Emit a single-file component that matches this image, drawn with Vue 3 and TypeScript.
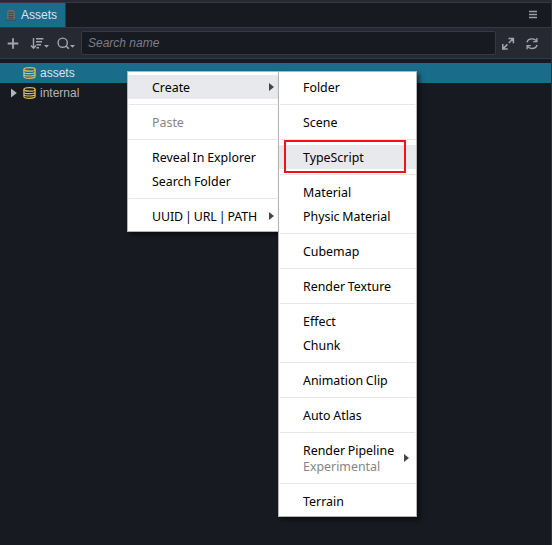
<script setup lang="ts">
interface Item {
  label: string
  note?: string
  active?: boolean
  disabled?: boolean
  sub?: boolean
  tight?: boolean
}

const mainMenu: Item[][] = [
  [{ label: 'Create', active: true, sub: true }],
  [{ label: 'Paste', disabled: true }],
  [{ label: 'Reveal In Explorer' }, { label: 'Search Folder' }],
  [{ label: 'UUID | URL | PATH', sub: true, tight: true }],
]

const createMenu: Item[][] = [
  [{ label: 'Folder' }],
  [{ label: 'Scene' }],
  [{ label: 'TypeScript', active: true }],
  [{ label: 'Material' }, { label: 'Physic Material' }],
  [{ label: 'Cubemap' }],
  [{ label: 'Render Texture' }],
  [{ label: 'Effect' }, { label: 'Chunk' }],
  [{ label: 'Animation Clip' }],
  [{ label: 'Auto Atlas' }],
  [{ label: 'Render Pipeline', note: 'Experimental', sub: true }],
  [{ label: 'Terrain' }],
]

const menus = [
  { name: 'main', groups: mainMenu },
  { name: 'create', groups: createMenu },
]

const nodes = [
  { name: 'assets', selected: true, arrow: false },
  { name: 'internal', selected: false, arrow: true },
]
</script>

<template>
  <div class="panel">
    <header class="tabs">
      <div class="tab">
        <svg class="tab-icon" width="10" height="12" viewBox="0 0 10 12">
          <path d="M1 11V2.5L2.5 .8h5L9 2.5V11z" fill="#6b6865" />
          <path d="M0 11.2h10M2.5 3.5h5M2.5 5.5h5M2.5 7.5h5M2.5 9.3h5" stroke="#44494c" stroke-width="1" />
        </svg>
        <span>Assets</span>
      </div>
      <svg class="burger" width="8" height="9" viewBox="0 0 8 9">
        <path d="M0 1.5h8M0 4.5h8M0 7.5h8" stroke="#9c9ea6" stroke-width="1.7" />
      </svg>
    </header>

    <div class="toolbar">
      <svg class="tools" width="81" height="30" viewBox="0 0 81 30" fill="none" stroke="#a3a5ae">
        <path d="M13 10.2v10.6M7.7 15.5h10.6" stroke-width="1.8" />
        <path d="M33.5 10v10M31 17.6l2.5 2.7 2.5-2.7" stroke-width="1.4" />
        <path d="M36 10.7h7.4M36 13.7h6M36.5 16.7h4.5M36.5 19.7h2.5" stroke-width="1.5" />
        <path d="M44 17h5l-2.5 2.7z" fill="#a3a5ae" stroke="none" />
        <circle cx="62.7" cy="14.7" r="4.6" stroke-width="1.4" />
        <path d="M65.8 17.8l3 3" stroke-width="1.6" />
        <path d="M70 17h5l-2.5 2.7z" fill="#a3a5ae" stroke="none" />
      </svg>
      <div class="search">Search name</div>
      <svg class="actions" width="55" height="30" viewBox="0 0 55 30" fill="none" stroke="#a3a5ae" stroke-width="1.3">
        <path d="M12.5 10.4h4.9v4.9M17 10.8l-4.2 4.2M6.8 16.1V21h4.9M7.2 20.6l4.2-4.2" stroke-width="1.5" />
        <path d="M30.9 14.3a5.2 4.3 0 0 1 9.4-1.6M40.9 10v3.6h-3.7M41.1 17a5.2 4.3 0 0 1-9.4 1.6M31.1 21.3v-3.6h3.7" />
      </svg>
    </div>

    <main class="tree">
      <div v-for="n in nodes" :key="n.name" class="node" :class="{ selected: n.selected }">
        <span class="fold">
          <svg v-if="n.arrow" width="6" height="10" viewBox="0 0 6 10"><path d="M0 .5L5.8 5 0 9.5z" fill="#b4b5b9" /></svg>
        </span>
        <svg class="db" width="13" height="12" viewBox="0 0 13 12" fill="none" stroke="#dfbd52" stroke-width="1.2">
          <ellipse cx="6.5" cy="2.4" rx="5.6" ry="1.8" />
          <path d="M.9 2.5v7c0 2.5 11.2 2.5 11.2 0v-7M.9 4.9c0 2.4 11.2 2.4 11.2 0M.9 7.2c0 2.4 11.2 2.4 11.2 0" />
        </svg>
        <span>{{ n.name }}</span>
      </div>
    </main>

    <div v-for="m in menus" :key="m.name" class="menu" :class="m.name">
      <div v-for="(g, i) in m.groups" :key="i" class="group">
        <div v-for="it in g" :key="it.label" class="item" :class="{ active: it.active, disabled: it.disabled, tall: it.note, tight: it.tight }">
          <div class="text">
            <span>{{ it.label }}</span>
            <span v-if="it.note" class="note">{{ it.note }}</span>
          </div>
          <svg v-if="it.sub" class="more" width="5" height="8" viewBox="0 0 5 8"><path d="M0 0l5 4-5 4z" fill="#444" /></svg>
        </div>
      </div>
    </div>
    <div class="marker"></div>
  </div>
</template>

<style>
body {
  margin: 0;
  background: #171a21;
}
</style>

<style scoped>
.panel {
  box-sizing: border-box;
  position: relative;
  width: 552px;
  height: 545px;
  overflow: hidden;
  padding-top: 2px;
  border-right: 1px solid #30333d;
  background: #171a21;
  color: #c9cbd0;
  font: 12px/20px "Liberation Sans", Arial, sans-serif;
  box-shadow: inset 0 2px #262932;
}
.tabs {
  box-sizing: border-box;
  display: flex;
  align-items: stretch;
  justify-content: space-between;
  height: 26px;
  border-top: 1px solid #363944;
  border-bottom: 1px solid #363944;
}
.tab {
  box-sizing: border-box;
  display: flex;
  align-items: center;
  width: 66px;
  padding-left: 6px;
  gap: 5px;
  border-right: 1px solid #363944;
  background: #196c8a;
  color: #dce5ea;
}
.burger {
  align-self: center;
  margin-right: 14px;
  margin-bottom: 2px;
}
.toolbar {
  box-sizing: border-box;
  display: flex;
  height: 31px;
  border-bottom: 1px solid #363944;
  background: #262932;
}
.search {
  box-sizing: border-box;
  flex: 1;
  height: 24px;
  margin-top: 3px;
  padding-left: 6px;
  border: 1px solid #363944;
  border-radius: 2px;
  background: #171a21;
  color: #7d7f84;
  font-style: italic;
  line-height: 22px;
}
.tree {
  padding-top: 4px;
}
.node {
  display: flex;
  align-items: center;
  height: 20px;
  color: #b3b5ba;
}
.node.selected {
  background: #196c8a;
  color: #dce5ea;
}
.fold {
  display: flex;
  width: 12px;
  padding-left: 11px;
}
.db {
  margin-right: 4px;
}
.menu {
  position: absolute;
  top: 71px;
  box-sizing: border-box;
  padding: 3px 0;
  border: 1px solid #b4b4b4;
  background: #fff;
  color: #000;
  box-shadow: 3px 3px 4px rgba(0, 0, 0, 0.5);
  font: 12.4px/16px "Noto Sans", "Open Sans", sans-serif;
  word-spacing: -0.5px;
}
.main {
  left: 127px;
  width: 152px;
}
.create {
  left: 278px;
  width: 139px;
}
.group + .group::before {
  content: "";
  display: block;
  height: 1px;
  margin: 5px 1px;
  background: #e6e6e6;
}
.item {
  box-sizing: border-box;
  display: flex;
  align-items: center;
  justify-content: space-between;
  height: 24px;
  padding: 0 4px 0 24px;
  white-space: nowrap;
}
.create .item {
  padding-right: 7px;
}
.item.tall {
  height: 40px;
}
.item.active {
  background: #e8e9ec;
}
.item.disabled {
  color: #868686;
}
.item.tight {
  word-spacing: -1px;
  letter-spacing: -0.12px;
}
.text {
  display: flex;
  flex-direction: column;
  padding-top: 2px;
}
.note {
  color: #868686;
}
.marker {
  position: absolute;
  left: 284px;
  top: 140px;
  box-sizing: border-box;
  width: 122px;
  height: 33px;
  border: 2px solid #f01414;
}
</style>
